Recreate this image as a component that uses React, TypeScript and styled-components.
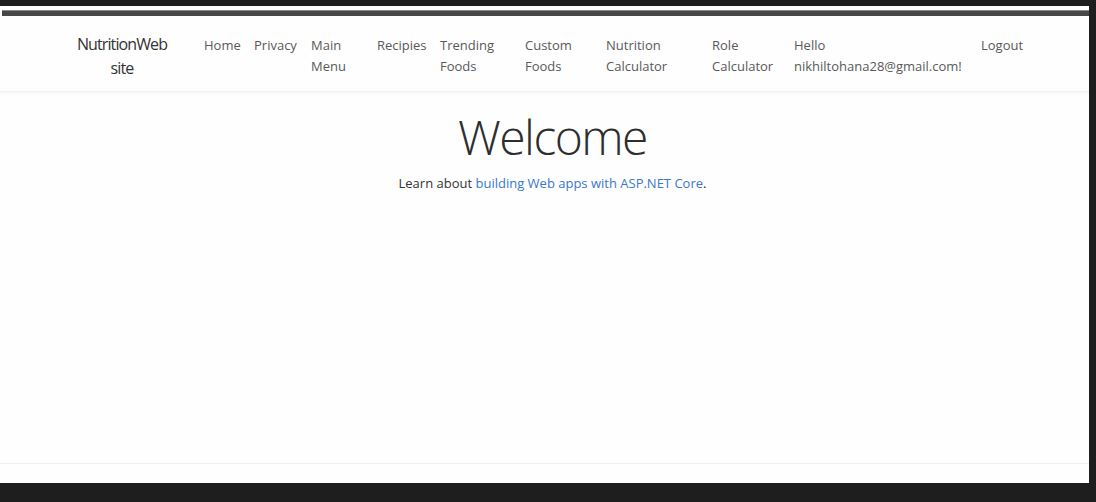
import React from "react";
import styled, { createGlobalStyle } from "styled-components";

const Global = createGlobalStyle`
  html, body { margin: 0; padding: 0; background: #1e1e1e; }
  body { font-family: "Open Sans", "Noto Sans", sans-serif; }
`;

const Frame = styled.div`
  margin-top: 6px;
  width: 1089px;
  height: 477px;
  background: #fefefe;
  display: flex;
  flex-direction: column;
  padding-top: 4px;
  box-sizing: border-box;
`;

const TopBar = styled.div`
  margin-left: 2px;
  height: 6px;
  background: #474747;
  border-top: 1px solid #8a8a8a;
  box-sizing: border-box;
`;

const Navbar = styled.nav`
  height: 76px;
  border-bottom: 1px solid #f0f0f0;
  box-shadow: 0 2px 4px rgba(0, 0, 0, 0.03);
  display: flex;
  align-items: flex-start;
  padding-left: 70px;
  box-sizing: border-box;
`;

const Brand = styled.a`
  width: 104px;
  padding-top: 16px;
  font-size: 16px;
  line-height: 24px;
  letter-spacing: -0.9px;
  color: #333;
  text-align: center;
  margin-right: 30px;
`;

const NavList = styled.ul`
  list-style: none;
  margin: 0;
  padding: 0;
  padding-top: 19px;
  display: flex;
`;

const NavItem = styled.li<{ $w: number }>`
  width: ${(p) => p.$w}px;
  font-size: 13px;
  line-height: 21px;
  color: #595959;
  white-space: pre-line;
`;

const Main = styled.main`
  flex: 1;
  display: flex;
  flex-direction: column;
  align-items: center;
  padding-top: 15px;
  padding-left: 16px;
`;

const Title = styled.h1`
  margin: 0;
  font-size: 48px;
  font-weight: 300;
  letter-spacing: -1.55px;
  color: #2e2e2e;
  line-height: 60px;
`;

const Lead = styled.p`
  margin: 7px 0 0;
  font-size: 13px;
  color: #333;
`;

const Link = styled.a`
  color: #3a78c9;
  text-decoration: none;
`;

const Footer = styled.footer`
  height: 19px;
  border-top: 1px solid #eeeeee;
`;

const items: [string, number][] = [
  ["Home", 50],
  ["Privacy", 57],
  ["Main\nMenu", 66],
  ["Recipies", 63],
  ["Trending\nFoods", 85],
  ["Custom\nFoods", 81],
  ["Nutrition\nCalculator", 106],
  ["Role\nCalculator", 82],
  ["Hello\nnikhiltohana28@gmail.com!", 187],
  ["Logout", 60],
];

export default function App() {
  return (
    <>
      <Global />
      <Frame>
        <TopBar />
        <Navbar>
          <Brand>NutritionWeb site</Brand>
          <NavList>
            {items.map(([t, w]) => (
              <NavItem key={t} $w={w}>
                {t}
              </NavItem>
            ))}
          </NavList>
        </Navbar>
        <Main>
          <Title>Welcome</Title>
          <Lead>
            Learn about <Link>building Web apps with ASP.NET Core</Link>.
          </Lead>
        </Main>
        <Footer />
      </Frame>
    </>
  );
}
